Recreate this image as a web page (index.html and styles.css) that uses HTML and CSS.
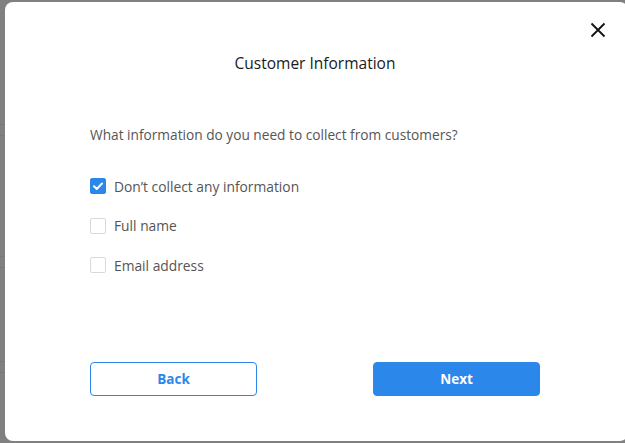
FILE: index.html
```html
<!DOCTYPE html>
<html lang="en">
<head>
<meta charset="utf-8">
<title>Customer Information</title>
<link rel="stylesheet" href="styles.css">
</head>
<body>
<div class="backdrop">
  <div class="bg-row r1"></div>
  <div class="bg-row r2"></div>
  <div class="bg-row r3"></div>
</div>
<div class="modal">
  <button class="close" aria-label="Close">
    <svg width="16" height="16" viewBox="0 0 16 16"><path d="M1.5 1.5 L14.5 14.5 M14.5 1.5 L1.5 14.5" stroke="#111" stroke-width="1.8" fill="none"/></svg>
  </button>
  <h1 class="title">Customer Information</h1>
  <p class="question">What information do you need to collect from customers?</p>
  <ul class="options">
    <li class="option"><span class="box checked"><svg width="16" height="16" viewBox="0 0 16 16"><path d="M4 8.2 L6.8 11 L12 5.5" stroke="#fff" stroke-width="2" fill="none" stroke-linecap="round" stroke-linejoin="round"/></svg></span><span class="label">Don’t collect any information</span></li>
    <li class="option"><span class="box"></span><span class="label">Full name</span></li>
    <li class="option"><span class="box"></span><span class="label">Email address</span></li>
  </ul>
  <div class="actions">
    <button class="btn btn-outline">Back</button>
    <button class="btn btn-primary">Next</button>
  </div>
</div>
</body>
</html>
```
FILE: styles.css
```css
* { box-sizing: border-box; }
html, body { margin: 0; padding: 0; }
body {
  width: 625px;
  height: 443px;
  overflow: hidden;
  background: #808080;
  font-family: "Open Sans", "Noto Sans", sans-serif;
  position: relative;
}
.backdrop {
  padding-top: 124px;
}
.bg-row {
  height: 12px;
  border-top: 1px solid #787878;
  border-bottom: 1px solid #787878;
}
.r2 { margin-top: 120px; }
.r3 { margin-top: 93px; }
.modal {
  position: absolute;
  left: 5px;
  top: 2px;
  width: 623px;
  height: 439px;
  background: #fff;
  border-radius: 8px;
  padding: 0 88px 0 85px;
}
.close {
  position: absolute;
  right: 22px;
  top: 20px;
  width: 16px;
  height: 16px;
  padding: 0;
  border: 0;
  background: none;
}
.close svg { display: block; }
.title {
  margin: 50px 0 0;
  font-size: 15.5px;
  font-weight: 400;
  color: #1a1a1a;
  text-align: center;
  line-height: 22px;
}
.question {
  margin: 51px 0 0;
  font-size: 13.7px;
  color: #555;
  line-height: 20px;
}
.options {
  list-style: none;
  margin: 31px 0 0;
  padding: 0;
  display: flex;
  flex-direction: column;
  gap: 19.5px;
}
.option {
  display: flex;
  align-items: center;
  gap: 8px;
  height: 20px;
}
.box {
  width: 16px;
  height: 16px;
  border: 1px solid #d9d9d9;
  border-radius: 2px;
  background: #fff;
  flex: none;
}
.box.checked {
  background: #2b87ea;
  border-color: #2b87ea;
  position: relative;
}
.box.checked svg { position: absolute; left: -1px; top: -1px; }
.label {
  font-size: 13.8px;
  color: #555;
}
.actions {
  margin-top: 87px;
  display: flex;
  justify-content: space-between;
}
.btn {
  width: 167px;
  height: 34px;
  border-radius: 4px;
  font-family: inherit;
  font-size: 13.5px;
  font-weight: 700;
  cursor: pointer;
}
.btn-outline {
  background: #fff;
  border: 1px solid #2b87ea;
  color: #2b87ea;
}
.btn-primary {
  background: #2b87ea;
  border: 1px solid #2b87ea;
  color: #fff;
}
```
